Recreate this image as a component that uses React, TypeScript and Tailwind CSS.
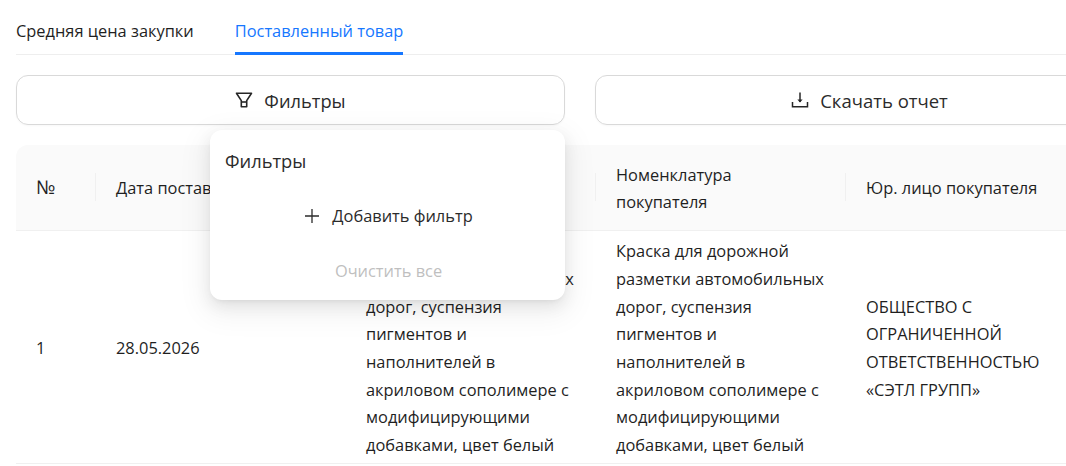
import React from "react";

const FONT = "font-['Open_Sans','Liberation_Sans',sans-serif]";

const description =
  "Краска для дорожной разметки автомобильных дорог, суспензия пигментов и наполнителей в акриловом сополимере с модифицирующими добавками, цвет белый";

const FilterIcon = () => (
  <svg width="18" height="18" viewBox="0 0 18 18" fill="none" stroke="#262626" strokeWidth="1.6">
    <path d="M1.5 2.2h15L11.7 9.6v6.2H6.3V9.6z" strokeLinejoin="round" />
    <path d="M6.3 11h5.4" />
  </svg>
);

const DownloadIcon = () => (
  <svg width="18" height="18" viewBox="0 0 18 18" fill="none" stroke="#262626" strokeWidth="1.5">
    <path d="M9 1.5v9.5" />
    <path d="M9 11.6 6.4 8.6h5.2z" fill="#262626" stroke="none" />
    <path d="M1.5 11v4.8h15V11" />
  </svg>
);

const PlusIcon = () => (
  <svg width="16" height="16" viewBox="0 0 16 16" fill="none" stroke="#2b2b2b" strokeWidth="1.3">
    <path d="M8 1v14M1 8h14" />
  </svg>
);

const HeadCell = ({ width, children }: { width: string; children: React.ReactNode }) => (
  <div className={`${width} shrink-0 relative flex items-center pl-5 pr-5 leading-[27px]`}>
    {children}
    <span className="absolute right-0 top-[28px] h-[28px] w-px bg-[#f0f0f0]" />
  </div>
);

const Cell = ({ width, children }: { width: string; children: React.ReactNode }) => (
  <div className={`${width} shrink-0 flex items-center pl-5 pr-4 pt-[2px] leading-[27.7px]`}>{children}</div>
);

export default function App() {
  return (
    <div className={`${FONT} relative w-[1066px] h-[466px] overflow-hidden bg-white text-[16.4px] text-[#1f1f1f]`}>
      <div className="pl-4">
        <div className="flex gap-[41px] h-[55px] border-b border-[#eeeeee]">
          <div className="pt-[19px]">Средняя цена закупки</div>
          <div className="relative pt-[19px] text-[#1677ff]">
            Поставленный товар
            <span className="absolute left-0 right-0 bottom-[-1px] h-[3px] bg-[#1677ff]" />
          </div>
        </div>

        <div className="flex gap-[30px] mt-5 w-[1130px]">
          <button className="w-[549px] h-[50px] flex items-center justify-center gap-[11px] rounded-xl border border-[#d9d9d9] shadow-[0_1px_2px_rgba(0,0,0,0.03)] text-[#2b2b2b] text-[18.3px]">
            <FilterIcon />
            <span className="pt-px">Фильтры</span>
          </button>
          <button className="w-[549px] h-[50px] flex items-center justify-center gap-[11px] rounded-xl border border-[#d9d9d9] shadow-[0_1px_2px_rgba(0,0,0,0.03)] text-[#2b2b2b] text-[18.5px]">
            <DownloadIcon />
            <span className="pt-px">Скачать отчет</span>
          </button>
        </div>

        <div className="mt-5 w-[1100px]">
          <div className="flex h-[86px] rounded-t-xl bg-[#fafafa] border-b border-[#f0f0f0]">
            <HeadCell width="w-[80px]">
              <span className="text-[19px]">№</span>
            </HeadCell>
            <HeadCell width="w-[250px]">Дата поставки</HeadCell>
            <HeadCell width="w-[250px]">Номенклатура поставщика</HeadCell>
            <HeadCell width="w-[250px]">Номенклатура покупателя</HeadCell>
            <HeadCell width="w-[250px]">Юр. лицо покупателя</HeadCell>
          </div>
          <div className="flex h-[233px] border-b border-[#f0f0f0]">
            <Cell width="w-[80px]">1</Cell>
            <Cell width="w-[250px]">28.05.2026</Cell>
            <Cell width="w-[250px]">{description}</Cell>
            <Cell width="w-[250px]">{description}</Cell>
            <Cell width="w-[250px]">ОБЩЕСТВО С ОГРАНИЧЕННОЙ ОТВЕТСТВЕННОСТЬЮ «СЭТЛ ГРУПП»</Cell>
          </div>
        </div>
      </div>

      <div className="absolute left-[210px] top-[130px] w-[355px] h-[170px] rounded-xl bg-white shadow-[0_6px_16px_rgba(0,0,0,0.08),0_3px_6px_-4px_rgba(0,0,0,0.12),0_9px_28px_8px_rgba(0,0,0,0.05)] flex flex-col px-[15px]">
        <div className="pt-[17px] text-[18.3px] text-[#2b2b2b] leading-[27px]">Фильтры</div>
        <div className="mt-[28px] pl-[2px] flex items-center justify-center gap-3 text-[#2b2b2b] leading-[27px]">
          <PlusIcon />
          <span>Добавить фильтр</span>
        </div>
        <div className="mt-[28px] pl-[2px] text-center text-[#bfbfbf] leading-[27px]">Очистить все</div>
      </div>
    </div>
  );
}
